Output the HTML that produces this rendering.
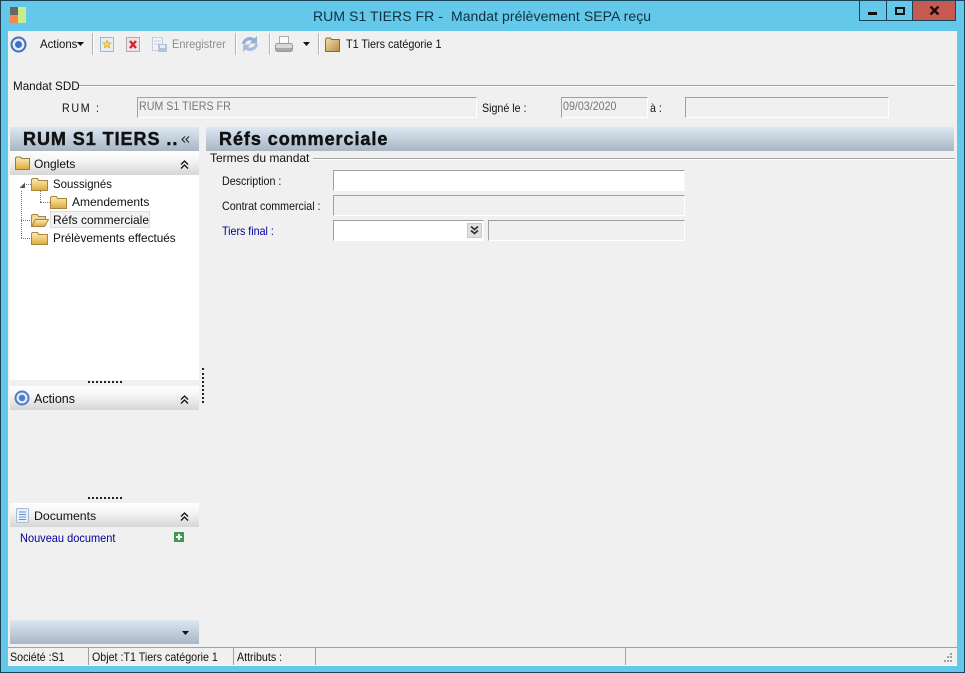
<!DOCTYPE html>
<html><head><meta charset="utf-8"><style>
html,body{margin:0;padding:0}
body{width:965px;height:673px;overflow:hidden;position:relative;background:#f0f0f0;font-family:"Liberation Sans",sans-serif;font-size:12px;color:#111}
.a,.t,.i{position:absolute}
.t{white-space:nowrap;line-height:14px;transform-origin:left center}
.s{transform:scaleX(.89)}
.i{box-sizing:border-box;border-top:1px solid #a0a0a0;border-left:1px solid #a0a0a0;border-right:1px solid #fff;border-bottom:1px solid #fff;background:#f0f0f0;color:#777}
.w{background:#fff;border-right-color:#f8f8f8}
.hd{position:absolute;left:10px;width:189px;height:24px;background:linear-gradient(#fff,#f6f6f6 35%,#d6d6d6)}
.bl{position:absolute;height:24px;background:linear-gradient(#dce7f1,#a9b6c4)}
.sep{position:absolute;width:1px;top:33px;height:22px;background:#b4b4b4;border-right:1px solid #fff}
.ln{position:absolute;height:1px;background:#a0a0a0;border-bottom:1px solid #fff}
.dot{position:absolute;border-color:#777;border-style:dotted;border-width:0}
.b{font-size:18px;line-height:21px;font-weight:bold;color:#111;letter-spacing:.95px;-webkit-text-stroke:.45px #111}
</style></head><body>
<svg width="0" height="0" style="position:absolute"><defs><linearGradient id="g" x1="0" y1="0" x2="0" y2="1"><stop offset="0" stop-color="#fbeeb8"/><stop offset="1" stop-color="#e0a93c"/></linearGradient><linearGradient id="h" x1="0" y1="0" x2="1" y2="1"><stop offset="0" stop-color="#f4e0a8"/><stop offset="1" stop-color="#b98c40"/></linearGradient></defs></svg>
<div class="a" style="left:0;top:0;width:965px;height:673px;background:#63c8ea;box-sizing:border-box;border:1px solid #1c4256"></div>
<div class="a" style="left:8px;top:31px;width:949px;height:635px;background:#f0f0f0"></div>

<svg class="a" style="left:10px;top:7px" width="16" height="16"><rect width="8" height="8" fill="#666"/><rect y="8" width="8" height="8" fill="#f08a50"/><rect x="8" width="8" height="16" fill="#c9ec8c"/></svg>
<div class="t" style="left:313px;top:8px;font-size:14px;line-height:17px;color:#10303f;letter-spacing:.07px">RUM S1 TIERS FR -&nbsp; Mandat prélèvement SEPA reçu</div>

<div class="a" style="left:859px;top:1px;width:97px;height:20px;box-sizing:border-box;border:1px solid #1c4256;border-top:0;background:#63c8ea"></div>
<div class="a" style="left:886px;top:1px;width:1px;height:20px;background:#1c4256"></div>
<div class="a" style="left:912px;top:1px;width:1px;height:20px;background:#1c4256"></div>
<div class="a" style="left:913px;top:1px;width:42px;height:19px;background:#c75a50"></div>
<div class="a" style="left:868px;top:12px;width:9px;height:3px;background:#111"></div>
<div class="a" style="left:895px;top:7px;width:10px;height:8px;box-sizing:border-box;border:2px solid #111;border-top-width:2px"></div>
<svg class="a" style="left:929px;top:6px" width="11" height="9"><path d="M1.5 .5L9.5 8.5M9.5 .5L1.500 8.500" stroke="#111" stroke-width="2.400"/></svg>

<!-- toolbar -->
<svg class="a" style="left:10px;top:36px" width="18" height="18"><circle cx="8.500" cy="8.500" r="7" fill="#e4ecf8" stroke="#3f6fc0" stroke-width="2"/><circle cx="8.500" cy="8.500" r="3.500" fill="#3f6fc0"/></svg>
<div class="t" style="left:40px;top:37px;color:#111;transform:scaleX(.95)">Actions</div>
<svg class="a" style="left:77px;top:42px" width="8" height="5"><path d="M0 0H7L3.500 4z" fill="#111"/></svg>
<div class="sep" style="left:92px"></div>
<svg class="a" style="left:100px;top:37px" width="14" height="15"><rect x=".5" y=".5" width="13" height="14" fill="#e8eef8" stroke="#a9b4c8"/><path d="M7 3l1.300 2.700 3 .3-2.200 2 .6 3L7 9.500 4.300 11l.6-3L2.700 6l3-.3z" fill="#f5d33e" stroke="#c79c20" stroke-width=".5"/></svg>
<svg class="a" style="left:126px;top:37px" width="14" height="15"><rect x=".5" y=".5" width="13" height="14" fill="#eee3e6" stroke="#b4a9b4"/><path d="M4 4l6 7M10 4l-6 7" stroke="#d8232a" stroke-width="2.400"/></svg>
<svg class="a" style="left:152px;top:37px" width="16" height="16"><rect x=".5" y=".5" width="10" height="13" fill="#f2f4f8" stroke="#c5cdd8"/><path d="M2 4h7M2 7h7" stroke="#c8d0dc"/><rect x="6" y="7" width="9" height="8" fill="#b4c2d6"/><rect x="8" y="8" width="5" height="3" fill="#e8eef4"/></svg>
<div class="t" style="left:172px;top:37px;color:#8d8d8d;transform:scaleX(.917)">Enregistrer</div>
<div class="sep" style="left:235px"></div>
<svg class="a" style="left:241px;top:35px" width="18" height="18"><path d="M1 9C1.500 3 9 0 13.500 3.500L16 1v7.500H8.500L11 6C8.500 4.500 5 5.500 4 9z" fill="#8fb0d8"/><path d="M17 9C16.500 15 9 18 4.500 14.500L2 17V9.500H9.500L7 12c2.500 1.500 6 .5 7-3z" fill="#a5bedb"/></svg>
<div class="sep" style="left:269px"></div>
<svg class="a" style="left:275px;top:36px" width="18" height="18"><rect x="4.500" y=".5" width="9" height="7" fill="#fafafa" stroke="#aaa"/><rect x=".5" y="7.500" width="17" height="8" rx="2" fill="#d8d8d8" stroke="#999"/><rect x="1" y="12" width="16" height="3" fill="#a8a8a8"/></svg>
<svg class="a" style="left:303px;top:42px" width="8" height="5"><path d="M0 0H7L3.500 4z" fill="#111"/></svg>
<div class="sep" style="left:318px"></div>
<svg class="a" style="left:325px;top:37px" width="16" height="15"><path d="M.5 14.500V2.500l1-1.500h4l1 1.500h8v12z" fill="url(#h)" stroke="#8a6a30"/></svg>
<div class="t" style="left:346px;top:37px;color:#111;transform:scaleX(.9)">T1 Tiers catégorie 1</div>

<!-- Mandat -->
<div class="t" style="left:13px;top:79px;transform:scaleX(.97)">Mandat SDD</div>
<div class="ln" style="left:79px;top:85px;width:876px"></div>
<div class="t s" style="left:62px;top:101px;letter-spacing:1.900px">RUM :</div>
<div class="i" style="left:137px;top:97px;width:340px;height:21px"></div>
<div class="t s" style="left:139px;top:99px;color:#777">RUM S1 TIERS FR</div>
<div class="t s" style="left:482px;top:101px">Signé le :</div>
<div class="i" style="left:561px;top:97px;width:87px;height:21px"></div>
<div class="t s" style="left:563px;top:99px;color:#777">09/03/2020</div>
<div class="t s" style="left:650px;top:101px">à :</div>
<div class="i" style="left:685px;top:97px;width:204px;height:21px"></div>

<!-- Left panel -->
<div class="bl" style="left:10px;top:127px;width:189px"></div>
<div class="t b" style="left:23px;top:129px">RUM S1 TIERS ..</div>
<svg class="a" style="left:181px;top:136px" width="9" height="8"><path d="M4 .5L1 3.500 4 6.500M8 .5L5 3.500 8 6.500" fill="none" stroke="#222" stroke-width="1.100"/></svg>
<div class="hd" style="top:151px"></div>
<div class="a" style="left:10px;top:175px;width:189px;height:205px;background:#fff"></div>
<svg class="a" style="left:15px;top:156px" width="15" height="14"><path d="M.5 13.500V2l1-1h4l1 1.500h8v11z" fill="url(#g)" stroke="#9a7a3c"/></svg>
<div class="t" style="left:34px;top:157px">Onglets</div>
<svg class="a" style="left:180px;top:160px" width="9" height="10"><path d="M1 4.500L4.500 1 8 4.500M1 8.500L4.500 5 8 8.500" fill="none" stroke="#111" stroke-width="1.300"/></svg>

<!-- tree -->
<div class="dot" style="left:21px;top:191px;height:47px;border-left-width:1px"></div>
<div class="dot" style="left:21px;top:220px;width:11px;border-top-width:1px"></div>
<div class="dot" style="left:21px;top:238px;width:11px;border-top-width:1px"></div>
<div class="dot" style="left:40px;top:191px;height:11px;border-left-width:1px"></div>
<div class="dot" style="left:40px;top:202px;width:12px;border-top-width:1px"></div>
<div class="dot" style="left:26px;top:184px;width:5px;border-top-width:1px"></div>
<svg class="a" style="left:19px;top:182px" width="7" height="7"><path d="M.5 6H6V.5z" fill="#555"/></svg>
<svg class="a" style="left:31px;top:178px" width="17" height="13"><path d="M.5 12.500V1.500l1-1h5l1 2h9v10z" fill="url(#g)" stroke="#a8843c"/></svg>
<svg class="a" style="left:50px;top:196px" width="17" height="13"><path d="M.5 12.500V1.500l1-1h5l1 2h9v10z" fill="url(#g)" stroke="#a8843c"/></svg>
<svg class="a" style="left:31px;top:214px" width="18" height="13"><path d="M.5 12.500V1.500l1-1h5l1 2h7v3" fill="#f0d898" stroke="#a8843c"/><path d="M.5 12.500l4-7h13l-4 7z" fill="url(#g)" stroke="#a8843c"/></svg>
<svg class="a" style="left:31px;top:232px" width="17" height="13"><path d="M.5 12.500V1.500l1-1h5l1 2h9v10z" fill="url(#g)" stroke="#a8843c"/></svg>
<div class="a" style="left:50px;top:211px;width:100px;height:17px;background:#f2f2f2;box-sizing:border-box;border:1px solid #dcdcdc"></div>
<div class="t" style="left:53px;top:177px;transform:scaleX(.95)">Soussignés</div>
<div class="t" style="left:72px;top:195px">Amendements</div>
<div class="t" style="left:53px;top:213px">Réfs commerciale</div>
<div class="t" style="left:53px;top:231px;transform:scaleX(.98)">Prélèvements effectués</div>

<!-- splitters -->
<div class="dot" style="left:88px;top:381px;width:34px;border-top:2px dotted #222"></div>
<div class="dot" style="left:202px;top:368px;height:35px;border-left:2px dotted #222"></div>
<div class="hd" style="top:386px"></div>
<svg class="a" style="left:14px;top:390px" width="18" height="18"><circle cx="8" cy="8" r="6.500" fill="#e4ecf8" stroke="#4a7cc8" stroke-width="2"/><circle cx="8" cy="8" r="3.200" fill="#4a7cc8"/></svg>
<div class="t" style="left:34px;top:392px;font-size:12.500px">Actions</div>
<svg class="a" style="left:180px;top:395px" width="9" height="10"><path d="M1 4.500L4.500 1 8 4.500M1 8.500L4.500 5 8 8.500" fill="none" stroke="#111" stroke-width="1.300"/></svg>
<div class="dot" style="left:88px;top:497px;width:34px;border-top:2px dotted #222"></div>
<div class="hd" style="top:503px"></div>
<svg class="a" style="left:16px;top:508px" width="13" height="15"><rect x=".5" y=".5" width="12" height="14" rx="1" fill="#e8f0fa" stroke="#a8bcd8"/><path d="M3 4h7M3 6.500h7M3 9h7M3 11.500h7" stroke="#6f90c4"/></svg>
<div class="t" style="left:34px;top:509px;font-size:12.300px">Documents</div>
<svg class="a" style="left:180px;top:512px" width="9" height="10"><path d="M1 4.500L4.500 1 8 4.500M1 8.500L4.500 5 8 8.500" fill="none" stroke="#111" stroke-width="1.300"/></svg>
<div class="t" style="left:20px;top:531px;color:#00009c;transform:scaleX(.917)">Nouveau document</div>
<svg class="a" style="left:174px;top:532px" width="11" height="10"><rect width="10" height="10" fill="#3f9a4c"/><path d="M5 2v6M2 5h6" stroke="#fff" stroke-width="2"/></svg>
<div class="bl" style="left:10px;top:620px;width:189px"></div>
<svg class="a" style="left:182px;top:631px" width="8" height="5"><path d="M0 0H7L3.500 4z" fill="#111"/></svg>

<!-- right -->
<div class="bl" style="left:206px;top:127px;width:748px"></div>
<div class="t b" style="left:219px;top:129px">Réfs commerciale</div>
<div class="t" style="left:210px;top:151px">Termes du mandat</div>
<div class="ln" style="left:313px;top:158px;width:642px"></div>
<div class="t s" style="left:222px;top:174px">Description :</div>
<div class="i w" style="left:333px;top:170px;width:352px;height:21px"></div>
<div class="t s" style="left:222px;top:199px">Contrat commercial :</div>
<div class="i" style="left:333px;top:195px;width:352px;height:21px"></div>
<div class="t s" style="left:222px;top:224px;color:#00009c">Tiers final :</div>
<div class="i w" style="left:333px;top:220px;width:151px;height:21px"></div>
<div class="a" style="left:467px;top:223px;width:15px;height:15px;box-sizing:border-box;background:#e0e0e0;border:1px solid #c8c8c8"></div>
<svg class="a" style="left:469px;top:225px" width="11" height="11"><path d="M2 1.500L5.500 4.500 9 1.500M2 5.500L5.500 8.500 9 5.500" fill="none" stroke="#333" stroke-width="1.800"/></svg>
<div class="i" style="left:488px;top:220px;width:197px;height:21px"></div>

<!-- status -->
<div class="a" style="left:8px;top:647px;width:949px;height:1px;background:#a0a0a0"></div>
<div class="a" style="left:88px;top:648px;width:1px;height:17px;background:#a0a0a0"></div>
<div class="a" style="left:233px;top:648px;width:1px;height:17px;background:#a0a0a0"></div>
<div class="a" style="left:315px;top:648px;width:1px;height:17px;background:#a0a0a0"></div>
<div class="a" style="left:625px;top:648px;width:1px;height:17px;background:#a0a0a0"></div>
<div class="a" style="left:8px;top:665px;width:949px;height:1px;background:#fff"></div>
<div class="t s" style="left:10px;top:650px">Société :S1</div>
<div class="t s" style="left:92px;top:650px">Objet :T1 Tiers catégorie 1</div>
<div class="t s" style="left:237px;top:650px">Attributs :</div>
<svg class="a" style="left:941px;top:652px" width="12" height="12" fill="#a0a0a0"><rect x="9" y="1" width="2" height="2"/><rect x="6" y="4" width="2" height="2"/><rect x="9" y="4" width="2" height="2"/><rect x="3" y="8" width="2" height="2"/><rect x="6" y="8" width="2" height="2"/><rect x="9" y="8" width="2" height="2"/></svg>
</body></html>
